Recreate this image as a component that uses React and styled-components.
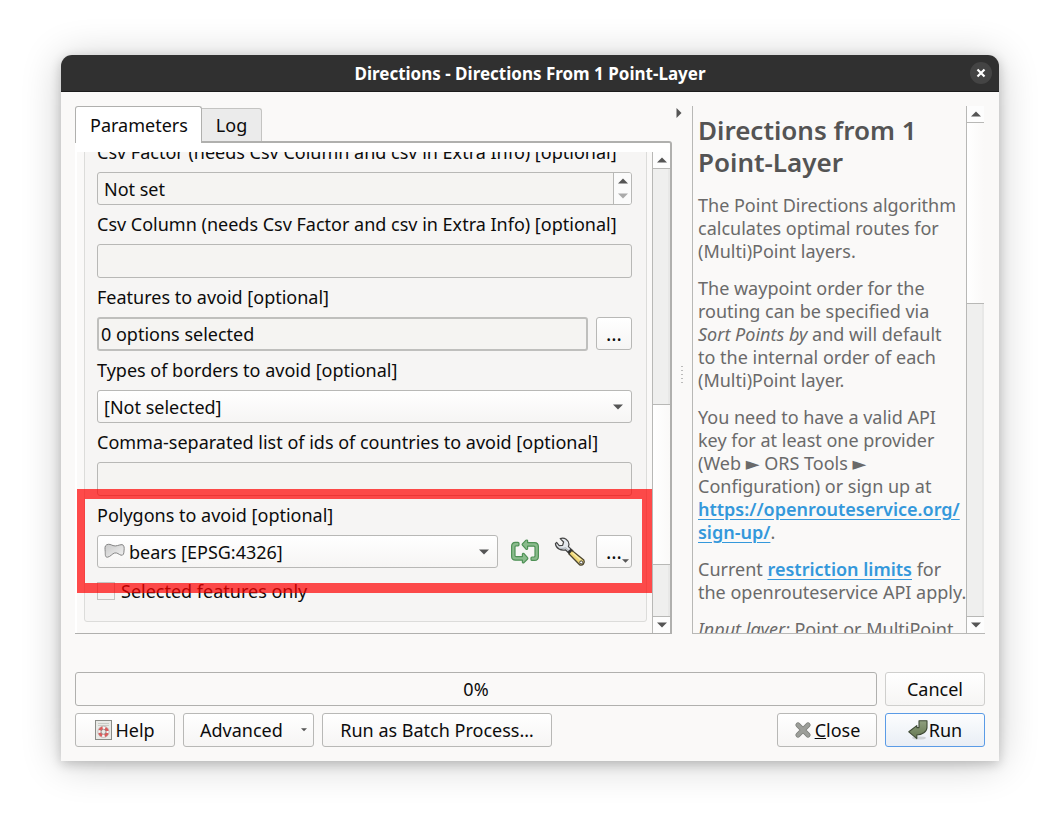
import React, { useState } from 'react'
import styled, { createGlobalStyle, css } from 'styled-components'

const BORDER_FEATURES = ['[Not selected]', 'all', 'controlled']
const LAYERS = ['bears [EPSG:4326]']

const Triangle = ({ dir = 'down', color = '#555', size = 10 }) => {
	const paths = {
		up: 'M0 5.5 L5 0.5 L10 5.5 Z',
		down: 'M0 0.5 L5 5.5 L10 0.5 Z',
	}
	return (
		<svg width={size} height={size * 0.6} viewBox='0 0 10 6' aria-hidden='true'>
			<path d={paths[dir]} fill={color} />
		</svg>
	)
}

const PolygonIcon = () => (
	<svg width='21' height='18' viewBox='0 0 21 18' aria-hidden='true'>
		<defs>
			<linearGradient id='poly' x1='0' y1='0' x2='1' y2='1'>
				<stop offset='0' stopColor='#c9c9c9' />
				<stop offset='1' stopColor='#f2f2f2' />
			</linearGradient>
		</defs>
		<path
			d='M2.6 1.8 C5 0.6 7.2 1.8 9 2.6 C12 3.8 15 1.6 18 1.6 C20.4 2 20.4 5 20 8 C19.8 10.6 19.6 12.6 17 12.2 C14.6 11.4 13.4 9.4 10.6 10 C8 10.8 6.6 13.6 3.6 14.2 C0.8 14.4 1.4 11.4 1.2 8.4 C1 5.6 0.4 3 2.6 1.8 Z'
			fill='url(#poly)'
			stroke='#858585'
		/>
	</svg>
)

const IterateIcon = () => (
	<svg width='30' height='28' viewBox='0 0 30 28' aria-hidden='true'>
		<g fill='#8abb8c' stroke='#4f9156' strokeWidth='1.2' strokeLinejoin='round'>
			<path d='M5.4 4.4 H8 Q9 4.4 9 5.4 V6.8 Q9 7.8 8 7.8 H6 Q5 7.8 5 8.8 V17.4 Q5 18.6 6.2 18.6 H12.4 V16.2 Q12.8 14.8 14 15.6 L17.6 19.6 Q18.2 20.2 17.6 21 L14 24.6 Q12.8 25.2 12.4 24.2 V22.2 H5.4 Q1.6 22 1.6 18.2 V8.4 Q1.6 4.6 5.4 4.4 Z' />
			<path d='M24.6 22.4 H22 Q21 22.4 21 21.4 V20 Q21 19 22 19 H24 Q25 19 25 18 V9.4 Q25 8.2 23.8 8.2 H17.6 V10.6 Q17.2 12 16 11.2 L12.4 7.2 Q11.8 6.6 12.4 5.8 L16 2.2 Q17.2 1.6 17.6 2.6 V4.6 H24.6 Q28.4 4.8 28.4 8.6 V18.4 Q28.4 22.2 24.6 22.4 Z' />
		</g>
	</svg>
)

const WrenchIcon = () => (
	<svg width='32' height='30' viewBox='0 0 32 30' aria-hidden='true'>
		<path
			d='M6.2 1.6 C10.4 0 14.8 3 15 7.4 L14.4 9.6 L18.8 13.6 L15.6 16.8 L11.4 12.8 C7 13.8 1.8 11.4 1.4 6.6 L2.6 5.4 L5.2 8.6 L8.6 8.4 L9.6 5 Z'
			fill='#e4e8ec'
			stroke='#444'
			strokeWidth='1.2'
			strokeLinejoin='round'
		/>
		<path d='M5.6 11 C8 12 9.6 11.4 11.6 10.8 L16 15' fill='none' stroke='#b3b9bf' strokeWidth='1.2' />
		<path
			d='M17.6 13.2 L29.8 23 C31.4 26 28.6 29 25.6 27.8 L14.8 16.8 Z'
			fill='#efd777'
			stroke='#4a4430'
			strokeWidth='1.3'
			strokeLinejoin='round'
		/>
		<path d='M17.4 12.6 L14.4 15.8' stroke='#333' strokeWidth='2.6' />
		<path d='M18.6 15.8 L27 23.2' stroke='#f9ecac' strokeWidth='1.4' />
		<circle cx='27.2' cy='25.4' r='1.5' fill='#fff' stroke='#444' strokeWidth='1' />
	</svg>
)

const HelpIcon = () => (
	<svg width='17' height='20' viewBox='0 0 17 20' aria-hidden='true'>
		<rect x='0.5' y='0.5' width='16' height='19' fill='#e9eae7' stroke='#8b8d88' />
		<path d='M3 3.5 H14 M3 5.5 H14' stroke='#c9ccc6' />
		<circle cx='8.5' cy='11.8' r='4.1' fill='none' stroke='#f7f7f7' strokeWidth='3' />
		<circle
			cx='8.5'
			cy='11.8'
			r='4.1'
			fill='none'
			stroke='#de5a5a'
			strokeWidth='3'
			strokeDasharray='3.8 2.64'
			transform='rotate(18 8.5 11.8)'
		/>
		<circle cx='8.5' cy='11.8' r='5.6' fill='none' stroke='#b5a3a0' strokeWidth='0.7' />
		<circle cx='8.5' cy='11.8' r='2.5' fill='none' stroke='#8d7572' strokeWidth='0.8' />
	</svg>
)

const CrossIcon = () => (
	<svg width='18' height='18' viewBox='0 0 18 18' aria-hidden='true'>
		<path d='M4 4 L14 14 M14 4 L4 14' stroke='#7d7f7a' strokeWidth='5.2' strokeLinecap='round' />
		<path d='M4 4 L14 14 M14 4 L4 14' stroke='#9c9e99' strokeWidth='3.6' strokeLinecap='round' />
	</svg>
)

const ApplyIcon = () => (
	<svg width='20' height='20' viewBox='0 0 20 20' aria-hidden='true'>
		<defs>
			<linearGradient id='apply' x1='0' y1='0' x2='0' y2='1'>
				<stop offset='0' stopColor='#8f9f7f' />
				<stop offset='1' stopColor='#64774f' />
			</linearGradient>
		</defs>
		<ellipse cx='11' cy='18' rx='7' ry='1.6' fill='#cfd3d6' />
		<path
			d='M11 0.8 H19 V7.6 C19 11.6 14 15 8.8 15 V18.6 L0.8 11.8 L8.8 5.6 V7.6 H11 Z'
			fill='url(#apply)'
			stroke='#3e4a35'
			strokeWidth='1.1'
			strokeLinejoin='round'
		/>
	</svg>
)

const ScrollBar = ({ before = 0, thumb, after }) => (
	<Scroll aria-hidden='true'>
		<ScrollEnd $up>
			<Triangle dir='up' />
		</ScrollEnd>
		{before > 0 && <ScrollTrack $grow={before} />}
		<ScrollThumb $grow={thumb} />
		<ScrollTrack $grow={after} />
		<ScrollEnd>
			<Triangle />
		</ScrollEnd>
	</Scroll>
)

const ParametersForm = () => {
	const [onlySelected, setOnlySelected] = useState(false)
	return (
		<FormGroup>
			<FieldLabel htmlFor='factor'>Csv Factor (needs Csv Column and csv in Extra Info) [optional]</FieldLabel>
			<SpinBox>
				<SpinInput id='factor' defaultValue='Not set' />
				<SpinButtons>
					<SpinButton type='button' aria-label='Increase'>
						<Triangle dir='up' />
					</SpinButton>
					<SpinButton type='button' aria-label='Decrease'>
						<Triangle color='#aaa' />
					</SpinButton>
				</SpinButtons>
			</SpinBox>

			<FieldLabel htmlFor='column'>Csv Column (needs Csv Factor and csv in Extra Info) [optional]</FieldLabel>
			<TextInput id='column' />

			<FieldLabel htmlFor='features'>Features to avoid [optional]</FieldLabel>
			<FieldRow>
				<TextInput id='features' defaultValue='0 options selected' readOnly $sunken />
				<MoreButton type='button' aria-label='Choose features'>
					…
				</MoreButton>
			</FieldRow>

			<FieldLabel htmlFor='borders'>Types of borders to avoid [optional]</FieldLabel>
			<ComboBox>
				<Select id='borders'>
					{BORDER_FEATURES.map((item) => (
						<option key={item}>{item}</option>
					))}
				</Select>
				<Triangle />
			</ComboBox>

			<FieldLabel htmlFor='countries'>Comma-separated list of ids of countries to avoid [optional]</FieldLabel>
			<TextInput id='countries' />

			<HighlightedField>
				<FieldLabel htmlFor='polygons'>Polygons to avoid [optional]</FieldLabel>
				<FieldRow>
					<ComboBox>
						<PolygonIcon />
						<Select id='polygons' $narrow>
							{LAYERS.map((item) => (
								<option key={item}>{item}</option>
							))}
						</Select>
						<Triangle />
					</ComboBox>
					<ToolButton type='button' aria-label='Iterate over this layer'>
						<IterateIcon />
					</ToolButton>
					<ToolButton type='button' aria-label='Advanced options'>
						<WrenchIcon />
					</ToolButton>
					<MoreButton type='button' aria-label='Browse'>
						…
						<MenuMark>
							<Triangle size={7} />
						</MenuMark>
					</MoreButton>
				</FieldRow>
				<HighlightFrame />
			</HighlightedField>

			<CheckRow>
				<CheckBox
					type='checkbox'
					checked={onlySelected}
					onChange={(e) => setOnlySelected(e.target.checked)}
				/>
				Selected features only
			</CheckRow>
		</FormGroup>
	)
}

const HelpText = () => (
	<HelpContent>
		<h1>
			Directions from 1
			<br />
			Point-Layer
		</h1>
		<p>
			The Point Directions algorithm
			<br />
			calculates optimal routes for
			<br />
			(Multi)Point layers.
		</p>
		<p>
			The waypoint order for the
			<br />
			routing can be specified via
			<br />
			<em>Sort Points by</em> and will default
			<br />
			to the internal order of each
			<br />
			(Multi)Point layer.
		</p>
		<p>
			You need to have a valid API
			<br />
			key for at least one provider
			<br />
			(Web ► ORS Tools ►
			<br />
			Configuration) or sign up at
			<br />
			<a href='https://openrouteservice.org/sign-up/'>
				https://openrouteservice.org/
				<br />
				sign-up/
			</a>
			.
		</p>
		<p>
			Current <a href='https://openrouteservice.org/restrictions/'>restriction limits</a> for
			<br />
			the openrouteservice API apply.
		</p>
		<p>
			<em>Input layer:</em> Point or MultiPoint
		</p>
	</HelpContent>
)

const App = () => {
	return (
		<Desktop>
			<GlobalStyle />
			<Dialog>
				<TitleBar>
					<Title>Directions - Directions From 1 Point-Layer</Title>
					<CloseButton aria-label='Close window'>
						<svg width='10' height='10' viewBox='0 0 10 10'>
							<path d='M1.5 1.5 L8.5 8.5 M8.5 1.5 L1.5 8.5' stroke='#fff' strokeWidth='2.2' />
						</svg>
					</CloseButton>
				</TitleBar>
				<Body>
					<Panes>
						<TabArea>
							<Tabs>
								<Tab $active>Parameters</Tab>
								<Tab>Log</Tab>
							</Tabs>
							<TabPage>
								<FormViewport>
									<ParametersForm />
								</FormViewport>
								<ScrollBar before={235} thumb={159} after={51} />
							</TabPage>
						</TabArea>
						<Splitter>
							<CollapseButton aria-label='Collapse help'>
								<svg width='6' height='10' viewBox='0 0 6 10'>
									<path d='M0.5 0 L5.5 5 L0.5 10 Z' fill='#555' />
								</svg>
							</CollapseButton>
							<Grip />
						</Splitter>
						<HelpPane>
							<HelpText />
							<ScrollBar thumb={180} after={312} />
						</HelpPane>
					</Panes>
					<ButtonRow>
						<Progress>0%</Progress>
						<Button $width={100} $light>
							Cancel
						</Button>
					</ButtonRow>
					<ButtonRow>
						<Button $width={100}>
							<HelpIcon />
							Help
						</Button>
						<Button $width={131} $menu>
							Advanced
							<Triangle size={6} />
						</Button>
						<Button $width={230}>Run as Batch Process…</Button>
						<Spacer />
						<Button $width={100}>
							<CrossIcon />
							<span>
								<u>C</u>lose
							</span>
						</Button>
						<Button $width={100} $primary>
							<ApplyIcon />
							Run
						</Button>
					</ButtonRow>
				</Body>
			</Dialog>
		</Desktop>
	)
}

export default App

const GlobalStyle = createGlobalStyle`
	* {
		box-sizing: border-box;
	}
	body {
		margin: 0;
		background: #fff;
	}
	body, button, input, select {
		font-family: 'Noto Sans', 'DejaVu Sans', sans-serif;
		font-size: 18px;
		color: #0c0c0c;
	}
	svg {
		display: block;
		flex: none;
	}
`

const Desktop = styled('main')`
	display: flex;
	height: 100vh;
	padding: 55px 61px 67px;
`

const Dialog = styled('section')`
	display: flex;
	flex-direction: column;
	flex: 1;
	min-width: 0;
	border-radius: 11px 11px 0 0;
	background: #faf9f8;
	box-shadow: 0 3px 12px rgba(0, 0, 0, 0.2), 0 3px 40px rgba(0, 0, 0, 0.2);
`

const TitleBar = styled('header')`
	display: flex;
	align-items: center;
	height: 37px;
	padding: 0 7px 0 29px;
	border-radius: 11px 11px 0 0;
	border-bottom: 1px solid #1c1c1c;
	background: #303030;
`

const Title = styled('div')`
	flex: 1;
	color: #fff;
	font-size: 17px;
	font-weight: 700;
	text-align: center;
`

const CloseButton = styled('button')`
	display: flex;
	align-items: center;
	justify-content: center;
	width: 22px;
	height: 22px;
	padding: 0;
	border: none;
	border-radius: 50%;
	background: #444;
`

const Body = styled('div')`
	display: flex;
	flex-direction: column;
	flex: 1;
	min-height: 0;
	padding: 14px;
	gap: 7px;
`

const Panes = styled('div')`
	display: grid;
	grid-template-columns: minmax(0, 1fr) 20px 293px;
	grid-template-rows: minmax(0, 1fr);
	flex: 1;
	min-height: 0;
	margin-bottom: 31px;
`

const TabArea = styled('div')`
	display: flex;
	flex-direction: column;
	min-height: 0;
`

const Tabs = styled('div')`
	display: flex;
	align-items: flex-end;
	height: 35px;
`

const Tab = styled('button')`
	height: 33px;
	padding: 0 14px 0 14px;
	border: 1px solid #c4c4c2;
	border-width: 1px 1px 0 0;
	border-radius: 0 3px 0 0;
	background: #ebebeb;
	${({ $active }) =>
		$active &&
		css`
			position: relative;
			height: 37px;
			margin-bottom: -2px;
			padding: 0 13px 0 14px;
			border: 1px solid #b0b0ae;
			border-bottom: none;
			border-radius: 3px 3px 0 0;
			background: #fff;
		`}
`

const TabPage = styled('div')`
	display: flex;
	flex: 1;
	min-height: 0;
	padding-top: 9px;
	border: solid #b0b0ae;
	border-width: 2px 2px 1px 0;
	border-radius: 0 3px 0 0;
	background: #fff;
`

const FormViewport = styled('div')`
	display: flex;
	flex-direction: column;
	justify-content: flex-end;
	flex: 1;
	min-width: 0;
	margin-left: 2px;
	padding: 0 5px 11px 7px;
	overflow: hidden;
	background: #faf9f8;
`

const FormGroup = styled('form')`
	display: flex;
	flex-direction: column;
	padding: 0 14px 18px 12px;
	border: 1px solid #dcdcda;
	border-radius: 3px;
	background: #f6f5f4;
`

const FieldLabel = styled('label')`
	display: block;
	height: 39px;
	line-height: 39px;
	white-space: nowrap;
`

const inputFrame = css`
	border: 1px solid #b8b8b6;
	border-radius: 3px;
	background: #f5f4f2;
`

const TextInput = styled('input')`
	${inputFrame}
	width: 100%;
	height: 34px;
	padding: 0 6px;
	${({ $sunken }) =>
		$sunken &&
		css`
			flex: 1;
			min-width: 0;
			padding: 0 2px;
			border-width: 2px;
			border-color: #bfbfbd;
		`}
`

const SpinBox = styled('div')`
	${inputFrame}
	display: flex;
	height: 33px;
	overflow: hidden;
`

const SpinInput = styled('input')`
	flex: 1;
	min-width: 0;
	padding: 0 6px;
	border: none;
	background: transparent;
`

const SpinButtons = styled('div')`
	display: flex;
	flex-direction: column;
	width: 18px;
	border-left: 1px solid #b8b8b6;
	background: #fbfbfb;
`

const SpinButton = styled('button')`
	display: flex;
	flex: 1;
	align-items: center;
	justify-content: center;
	padding: 0;
	border: none;
	background: transparent;
`

const FieldRow = styled('div')`
	display: flex;
	gap: 8px;
`

const raised = css`
	border: 1px solid #b8b8b6;
	border-radius: 3px;
	background: linear-gradient(#fff, #f6f5f4);
`

const ComboBox = styled('div')`
	${raised}
	display: flex;
	align-items: center;
	flex: 1;
	min-width: 0;
	min-height: 33px;
	padding: 0 8px 0 6px;
`

const Select = styled('select')`
	flex: 1;
	min-width: 0;
	padding: 0 ${({ $narrow }) => ($narrow ? '4px' : '0')};
	border: none;
	background: transparent;
	appearance: none;
`

const ToolButton = styled('button')`
	display: flex;
	align-items: center;
	justify-content: center;
	width: 37px;
	height: 33px;
	padding: 0;
	border: none;
	background: transparent;
`

const MoreButton = styled('button')`
	${raised}
	position: relative;
	width: 36px;
	height: 33px;
	padding: 0;
	font-size: 20px;
	line-height: 31px;
`

const MenuMark = styled('span')`
	position: absolute;
	right: 2px;
	bottom: 4px;
`

const HighlightedField = styled('div')`
	position: relative;
`

const HighlightFrame = styled('div')`
	position: absolute;
	inset: -7px -20px -25px -22px;
	border: 10px solid rgba(255, 0, 0, 0.7);
	pointer-events: none;
`

const CheckRow = styled('label')`
	display: flex;
	align-items: center;
	gap: 6px;
	height: 24px;
	margin-top: 11px;
	line-height: 24px;
`

const CheckBox = styled('input')`
	width: 18px;
	height: 18px;
	margin: 0;
	border: 1px solid #c4c4c2;
	background: #f6f5f4;
	appearance: none;
	&:checked {
		background: #888;
	}
`

const Scroll = styled('div')`
	display: flex;
	flex-direction: column;
	flex: none;
	width: 18px;
	border-left: 1px solid #b8b8b6;
	background: #fdfdfd;
`

const ScrollEnd = styled('div')`
	display: flex;
	align-items: center;
	justify-content: center;
	height: 17px;
	border: solid #b8b8b6;
	border-width: ${({ $up }) => ($up ? '0 0 1px' : '1px 0 0')};
`

const ScrollTrack = styled('div')`
	flex: ${({ $grow }) => $grow} 1 0;
	background: #efefee;
	border-right: 2px solid #e8e8e7;
`

const ScrollThumb = styled('div')`
	flex: ${({ $grow }) => $grow} 1 0;
	border: solid #b8b8b6;
	border-width: 1px 0;
	background: linear-gradient(to right, #fff, #faf9f8);
	${ScrollEnd} + & {
		border-top: none;
	}
`

const Splitter = styled('div')`
	display: flex;
	flex-direction: column;
	align-items: center;
	justify-content: space-between;
	padding-top: 2px;
`

const CollapseButton = styled('button')`
	align-self: flex-start;
	padding: 0 0 0 4px;
	border: none;
	background: transparent;
`

const Grip = styled('div')`
	width: 2px;
	height: 20px;
	margin: auto 0;
	background: repeating-linear-gradient(#bbb 0 1px, transparent 1px 4px);
`

const HelpPane = styled('aside')`
	display: flex;
	min-height: 0;
	padding-right: 1px;
	border: solid #b8b8b6;
	border-width: 0 0 1px 1px;
`

const HelpContent = styled('article')`
	flex: 1;
	min-width: 0;
	padding: 8px 0 0 5px;
	overflow: hidden;
	color: #6a6a6a;
	line-height: 23px;
	white-space: nowrap;
	& h1 {
		margin: 0 0 16px;
		color: #545454;
		font-size: 26px;
		font-weight: 600;
		line-height: 32px;
	}
	& p {
		margin: 0 0 14px;
	}
	& a {
		color: #3498db;
		font-weight: 600;
		text-underline-offset: 3px;
	}
`

const ButtonRow = styled('div')`
	display: flex;
	gap: 8px;
`

const Progress = styled('div')`
	display: flex;
	align-items: center;
	justify-content: center;
	flex: 1;
	height: 34px;
	border: 1px solid #b0b0ae;
	border-radius: 3px;
`

const Button = styled('button')`
	${raised}
	display: flex;
	align-items: center;
	justify-content: ${({ $menu }) => ($menu ? 'space-between' : 'center')};
	gap: 3px;
	width: ${({ $width }) => $width}px;
	height: 34px;
	padding: ${({ $menu }) => ($menu ? '0 6px 0 16px' : '0')};
	border-color: ${({ $light }) => ($light ? '#cfcfcd' : '#b8b8b6')};
	${({ $primary }) =>
		$primary &&
		css`
			gap: 1px;
			border-color: #5a9be6;
			background: linear-gradient(#fcfdfe, #e9eef5);
		`}
`

const Spacer = styled('div')`
	flex: 1;
`
